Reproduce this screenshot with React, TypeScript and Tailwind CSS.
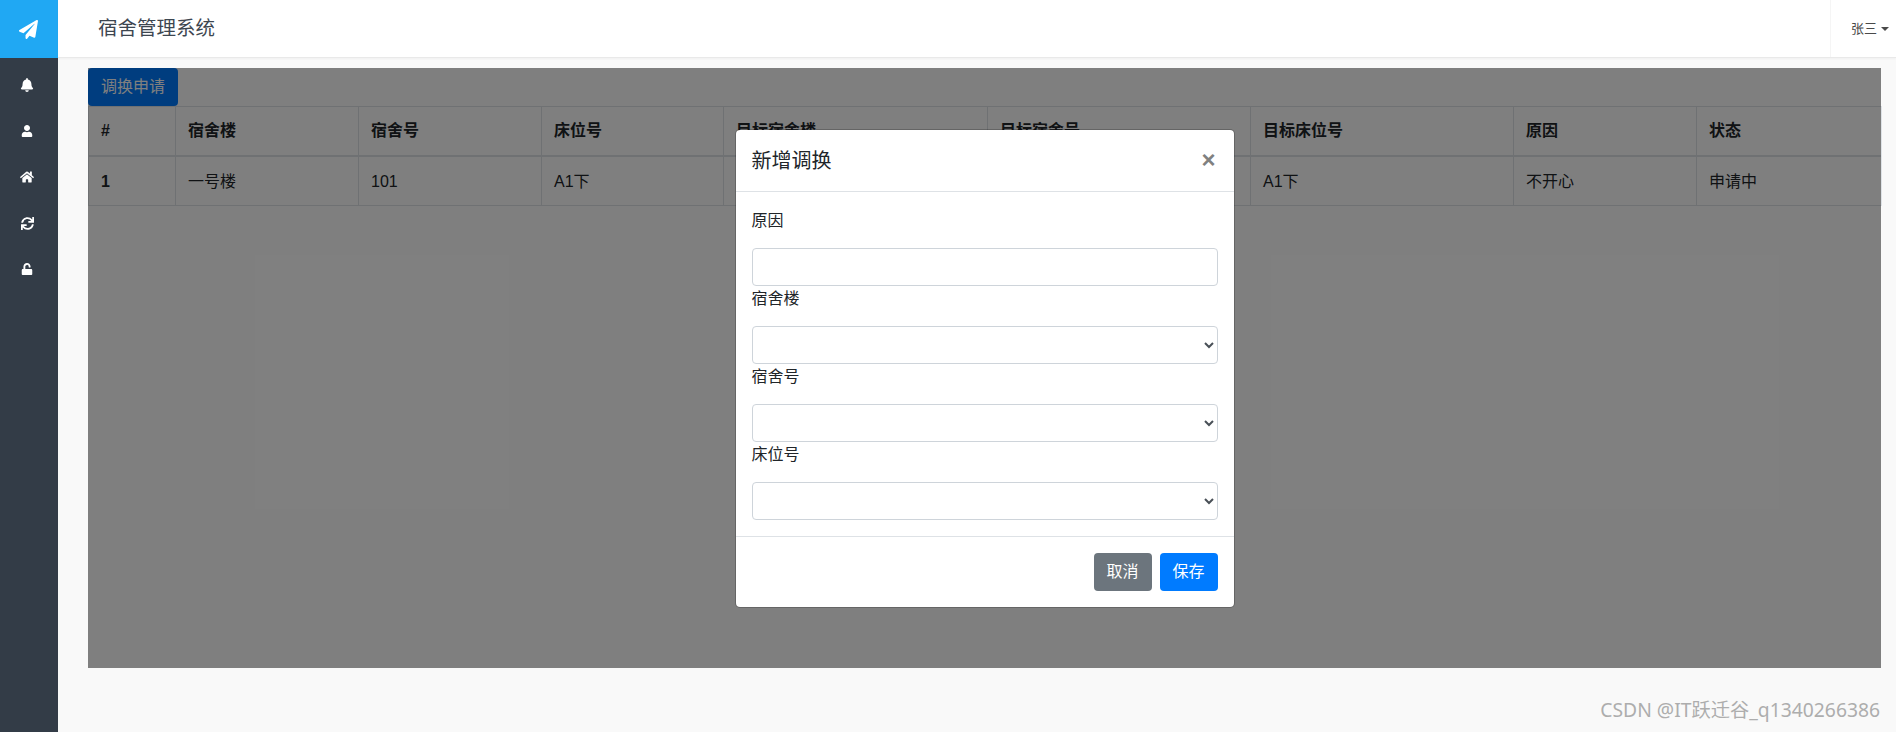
import React from "react"
import { FaPaperPlane, FaBell, FaUser, FaHome, FaSync, FaUnlock } from "react-icons/fa"

const navIcons = [
  { Icon: FaBell, size: "w-[14px] h-[14px]" },
  { Icon: FaUser, size: "w-[12px] h-[12px]" },
  { Icon: FaHome, size: "w-[14px] h-[14px]" },
  { Icon: FaSync, size: "w-[13px] h-[13px]" },
  { Icon: FaUnlock, size: "w-[12px] h-[12px]" },
]

const columns = [
  { title: "#", width: "w-[87px]" },
  { title: "宿舍楼", width: "w-[183px]" },
  { title: "宿舍号", width: "w-[183px]" },
  { title: "床位号", width: "w-[182px]" },
  { title: "目标宿舍楼", width: "w-[264px]" },
  { title: "目标宿舍号", width: "w-[263px]" },
  { title: "目标床位号", width: "w-[263px]" },
  { title: "原因", width: "w-[183px]" },
  { title: "状态", width: "w-[185px]" },
]

const row = ["一号楼", "101", "A1下", "二号楼", "102", "A1下", "不开心", "申请中"]

function Field({ label, select }: { label: string; select?: boolean }) {
  const cls = "block w-full h-[38px] rounded border border-[#ced4da] bg-white px-3 text-base text-[#495057]"
  return (
    <div>
      <label className="block mb-[14px] leading-[26px]">{label}</label>
      {select ? <select className={cls}></select> : <input type="text" className={cls} />}
    </div>
  )
}

export default function App() {
  return (
    <div className="relative flex h-[732px] overflow-hidden bg-[#f9f9f9] text-base text-[#212529] font-['Liberation_Sans','Noto_Sans_CJK_SC',sans-serif]">
      {/* Sidebar */}
      <aside className="w-[58px] shrink-0 bg-[#333c47] text-white">
        <div className="h-[58px] flex items-center justify-center pr-[2px] bg-[#20a8f3]">
          <FaPaperPlane className="w-[19px] h-[19px]" />
        </div>
        <nav className="flex flex-col items-center pt-[4px] pr-[4px]">
          {navIcons.map(({ Icon, size }, i) => (
            <div key={i} className="h-[46px] w-full flex items-center justify-center">
              <Icon className={size} />
            </div>
          ))}
        </nav>
      </aside>

      <div className="flex-1 flex flex-col min-w-0">
        {/* Headbar */}
        <header className="h-[58px] shrink-0 flex items-center justify-between bg-white border-b border-[#e9e9e9] shadow-[0_1px_2px_rgba(0,0,0,0.04)]">
          <span className="pl-10 text-[19.5px] text-[#3d4650]">宿舍管理系统</span>
          <div className="h-full w-[66px] flex items-center gap-1 pl-[20px] border-l border-[#f5f5f5] text-[13px] text-[#4a4a4a]">
            <span>张三</span>
            <span className="w-0 h-0 border-x-4 border-x-transparent border-t-4 border-t-[#4a4a4a]"></span>
          </div>
        </header>

        {/* Content */}
        <main className="relative mt-[10px] ml-[30px] mr-[15px] h-[600px] bg-white">
          <button className="block h-[38px] w-[90px] rounded bg-[#007bff] text-white">调换申请</button>
          <table className="table-fixed border-collapse w-full">
            <colgroup>
              {columns.map((c) => (
                <col key={c.title} className={c.width} />
              ))}
            </colgroup>
            <thead>
              <tr>
                {columns.map((c) => (
                  <th key={c.title} className="h-[49px] px-3 text-left font-bold border border-[#dee2e6] border-b-2">
                    {c.title}
                  </th>
                ))}
              </tr>
            </thead>
            <tbody>
              <tr>
                <th className="h-[50px] px-3 pt-[3px] text-left font-bold border border-[#dee2e6]">1</th>
                {row.map((v, i) => (
                  <td key={i} className="px-3 pt-[3px] border border-[#dee2e6]">
                    {v}
                  </td>
                ))}
              </tr>
            </tbody>
          </table>

          {/* Modal backdrop and dialog */}
          <div className="absolute inset-0 bg-black/50 flex justify-center pt-[61px]">
            <div className="w-[500px] h-[479px] rounded-[5px] border border-black/20 bg-white bg-clip-padding flex flex-col">
              <div className="h-[62px] shrink-0 flex items-center justify-between pl-4 pr-[18px] border-b border-[#dee2e6]">
                <h5 className="text-[20px] leading-[30px]">新增调换</h5>
                <span className="text-[24px] font-bold leading-none pb-[2px] text-[#808080]">×</span>
              </div>
              <div className="flex-1 p-4 flex flex-col">
                <Field label="原因" />
                <Field label="宿舍楼" select />
                <Field label="宿舍号" select />
                <Field label="床位号" select />
              </div>
              <div className="shrink-0 flex justify-end gap-2 p-4 border-t border-[#dee2e6]">
                <button className="h-[38px] w-[58px] rounded bg-[#6c757d] text-white">取消</button>
                <button className="h-[38px] w-[58px] rounded bg-[#007bff] text-white">保存</button>
              </div>
            </div>
          </div>
        </main>
      </div>

      {/* Watermark */}
      <div className="absolute right-[16px] top-[697px] text-[19.3px] leading-[26px] text-[#adadad] font-['Noto_Sans','Noto_Sans_CJK_SC',sans-serif]">
        CSDN @IT跃迁谷_q1340266386
      </div>
    </div>
  )
}
